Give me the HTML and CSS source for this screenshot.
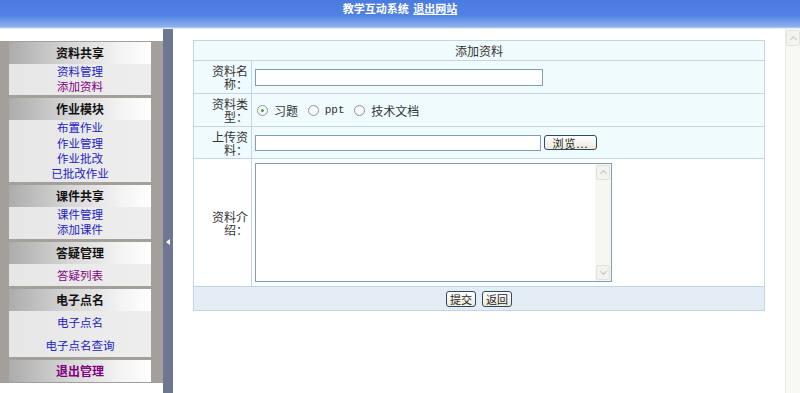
FILE: index.html
```html
<!DOCTYPE html>
<html lang="zh-CN">
<head>
<meta charset="utf-8">
<title>教学互动系统</title>
<link rel="stylesheet" href="styles.css">
</head>
<body>
<header class="top"><span>教学互动系统</span> <a href="#">退出网站</a></header>
<div class="frame">
  <aside class="left">
    <div class="menu-box">
      <div class="group">
        <div class="ghead">资料共享</div>
        <ul class="items"><li><a href="#">资料管理</a></li><li><a class="visited" href="#">添加资料</a></li></ul>
      </div>
      <div class="group">
        <div class="ghead">作业模块</div>
        <ul class="items"><li><a href="#">布置作业</a></li><li><a href="#">作业管理</a></li><li><a href="#">作业批改</a></li><li><a href="#">已批改作业</a></li></ul>
      </div>
      <div class="group">
        <div class="ghead">课件共享</div>
        <ul class="items"><li><a href="#">课件管理</a></li><li><a href="#">添加课件</a></li></ul>
      </div>
      <div class="group">
        <div class="ghead">答疑管理</div>
        <ul class="items single"><li><a class="visited" href="#">答疑列表</a></li></ul>
      </div>
      <div class="group">
        <div class="ghead">电子点名</div>
        <ul class="items tall"><li><a href="#">电子点名</a></li><li><a href="#">电子点名查询</a></li></ul>
      </div>
      <div class="group">
        <div class="ghead exit">退出管理</div>
      </div>
    </div>
  </aside>
  <div class="split"><span class="arrow"></span></div>
  <main class="main">
    <table class="form">
      <tr class="r-title"><td colspan="2" class="title">添加资料</td></tr>
      <tr class="r-33"><td class="label">资料名称：</td><td class="field"><input class="txt name" type="text"></td></tr>
      <tr class="r-33"><td class="label">资料类型：</td><td class="field">
        <label class="radio"><span class="dot on"></span>习题</label>
        <label class="radio"><span class="dot"></span><span class="mono">ppt</span></label>
        <label class="radio"><span class="dot"></span>技术文档</label>
      </td></tr>
      <tr class="r-32"><td class="label">上传资料：</td><td class="field"><div class="file"><input class="txt up" type="text"><button class="btn browse" type="button">浏览...</button></div></td></tr>
      <tr class="r-intro"><td class="label">资料介绍：</td><td class="field intro">
        <div class="area"><textarea></textarea><div class="sbar"><span class="sbtn up-a"></span><span class="sbtn down-a"></span></div></div>
      </td></tr>
      <tr class="r-foot"><td colspan="2" class="foot"><button class="btn" type="button">提交</button><button class="btn" type="button">返回</button></td></tr>
    </table>
  </main>
  <div class="vscroll"><span class="vup"></span></div>
</div>
</body>
</html>
```
FILE: styles.css
```css
* { box-sizing: border-box; }
html, body { margin: 0; padding: 0; }
body {
  width: 800px;
  height: 393px;
  overflow: hidden;
  background: #fff;
  font-family: "Noto Sans CJK SC", "Liberation Sans", sans-serif;
  font-size: 12px;
  color: #333;
}
.top {
  height: 29px;
  background: linear-gradient(#4a7be0 0, #4f81e2 15px, #8fb1f0 27px, #fff 29px);
  text-align: center;
  color: #fff;
  font-weight: bold;
  font-size: 11px;
  line-height: 17px;
}
.top a { color: #fff; text-decoration: underline; margin-left: 2px; }
.frame { display: flex; height: 364px; }
.left { width: 163px; padding-top: 12px; background: #fff; }
.menu-box { background: #a39f9a; padding: 1px 12px 1px 9px; }
.group { margin-top: 3px; }
.group:first-child { margin-top: 0; }
.ghead {
  height: 22px;
  line-height: 21px;
  text-align: center;
  font-weight: bold;
  color: #111;
  background: linear-gradient(to right, #acacac 0%, #d4d4d4 40%, #f4f4f4 80%, #fff 100%);
}
.ghead.exit { color: #800080; }
.items {
  list-style: none;
  margin: 0;
  padding: 0 0 1px;
  background: linear-gradient(to right, #e6e6e6, #eeeeee);
  text-align: center;
  font-size: 11.5px;
  line-height: 15.2px;
}
.items li { height: 15.2px; }
.items.single { padding: 0; }
.items.single li { height: 22px; line-height: 22px; }
.items.tall { padding: 0; }
.items.tall li { height: 23px; line-height: 23px; }
.items a { color: #2222c4; text-decoration: none; }
.items a.visited { color: #800080; }
.split { width: 10px; background: #6e7790; padding-top: 210px; }
.arrow {
  display: block;
  width: 0; height: 0;
  margin-left: 3px;
  border-top: 3px solid transparent;
  border-bottom: 3px solid transparent;
  border-right: 4px solid #fff;
}
.main { flex: 1; padding: 11px 20px 0 20px; }
.vscroll { width: 15px; background: #f9f9f4; border-left: 1px solid #ecece4; padding-top: 1px; }
.vup {
  display: block;
  width: 14px; height: 16px;
  border: 1px solid #e4e4dc;
  border-radius: 2px;
  background: #f4f4ee;
  position: relative;
}
.vup::after {
  content: "";
  position: absolute;
  left: 4px; top: 6px;
  width: 4px; height: 4px;
  border-left: 1px solid #c8c8c0;
  border-top: 1px solid #c8c8c0;
  transform: rotate(45deg);
}
.form { border-collapse: collapse; width: 572px; }
.form td { border: 1px solid #c3d5e7; padding: 0; background: #effbfd; }
.r-title td { height: 20px; }
.r-33 td { height: 33px; }
.r-32 td { height: 32px; }
.r-intro td { height: 128px; background: #fff; }
.r-foot td { height: 24px; background: #e4edf5; }
.title { text-align: center; line-height: 18px; }
.label {
  width: 58px;
  text-align: right;
  padding: 0 3px 0 16px !important;
  line-height: 13px;
  word-break: break-all;
}
.field { padding-left: 3px !important; }
.txt {
  display: block;
  height: 17px;
  border: 1px solid #7f9db9;
  background: #fff;
  margin: 0;
  padding: 0 2px;
  font: inherit;
}
.txt.name { width: 288px; }
.file { display: flex; align-items: center; gap: 3px; }
.txt.up { width: 286px; height: 16px; }
.radio { display: inline-flex; align-items: center; margin-right: 7px; color: #333; }
.radio:first-child { margin-left: 2px; }
.dot {
  display: inline-block;
  width: 11px; height: 11px;
  border: 1px solid #8c9aa6;
  border-radius: 50%;
  background: radial-gradient(circle, #fff 40%, #eaeaea 100%);
  margin-right: 6px;
  position: relative;
}
.dot.on::after {
  content: "";
  position: absolute;
  left: 3px; top: 3px;
  width: 3px; height: 3px;
  border-radius: 50%;
  background: #3aa84a;
}
.mono { font-family: "Liberation Mono", monospace; font-size: 11px; }
.btn {
  height: 15px;
  padding: 0 3px;
  border: 1px solid #2b4a68;
  border-radius: 3px;
  background: linear-gradient(#ffffff, #ece9d8);
  font: inherit;
  font-size: 11px;
  line-height: 12px;
  color: #222;
}
.btn.browse { width: 53px; letter-spacing: 1px; }
.intro { vertical-align: top; padding-top: 4px !important; }
.area {
  display: flex;
  width: 357px;
  height: 119px;
  border: 1px solid #7f9db9;
  background: #fff;
}
.area textarea {
  flex: 1;
  border: 0;
  resize: none;
  overflow: hidden;
  outline: none;
  margin: 0;
}
.sbar {
  width: 16px;
  background: #f7f7f1;
  display: flex;
  flex-direction: column;
  justify-content: space-between;
  padding: 1px;
}
.sbtn {
  display: block;
  height: 15px;
  border: 1px solid #e2e2da;
  border-radius: 2px;
  background: #f3f3ed;
  position: relative;
}
.sbtn::after {
  content: "";
  position: absolute;
  left: 4px;
  width: 4px; height: 4px;
  border-left: 1px solid #bfc3c8;
  border-top: 1px solid #bfc3c8;
}
.up-a::after { top: 5px; transform: rotate(45deg); }
.down-a::after { top: 3px; transform: rotate(225deg); }
.foot { text-align: center; }
.foot .btn { margin: 0 3px; height: 16px; }
```
